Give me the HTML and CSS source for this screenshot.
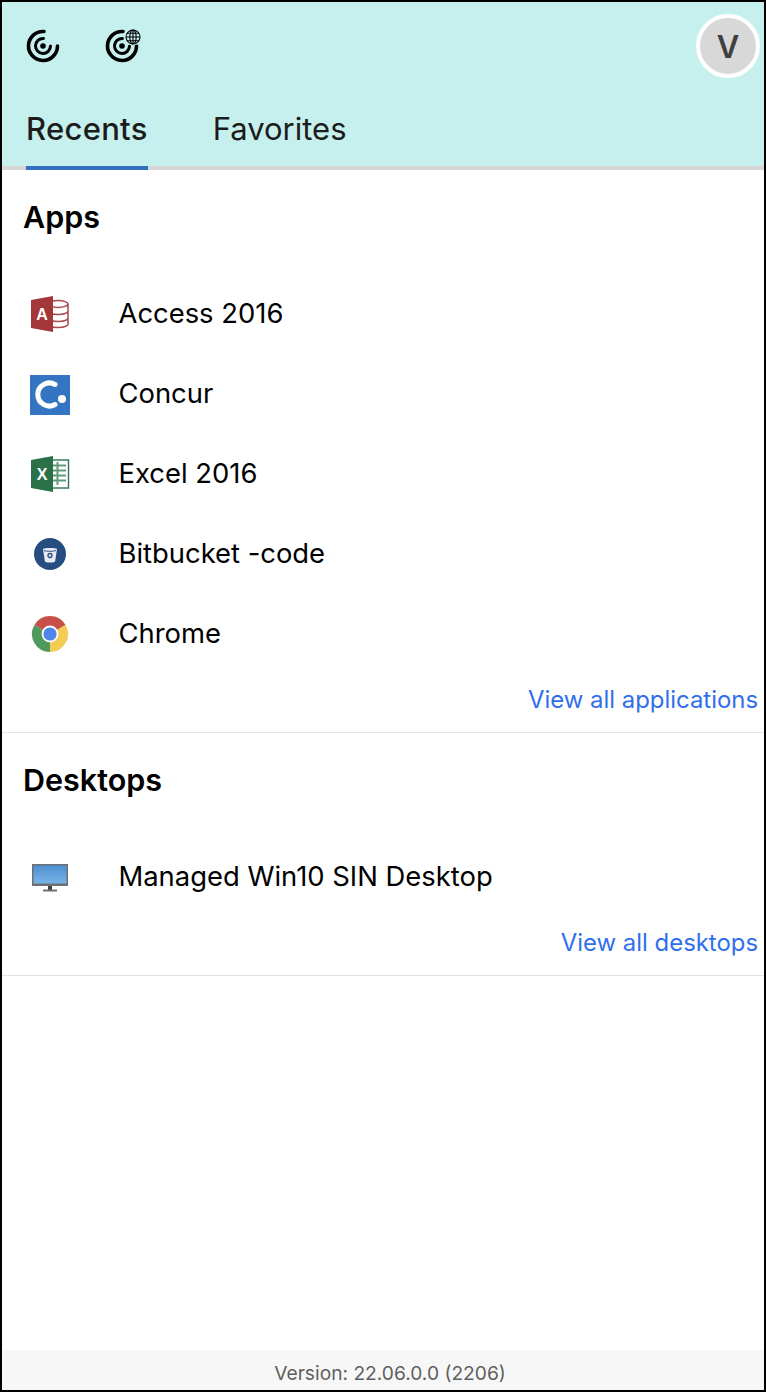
FILE: index.html
```html
<!DOCTYPE html>
<html lang="en">
<head>
    <meta charset="UTF-8">
    <meta name="viewport" content="width=device-width, initial-scale=1.0">
    <title>Workspace</title>
    <link rel="stylesheet" href="styles.css">
</head>
<body>
    <div class="frame">
        <header class="top">
            <div class="top-bar">
                <div class="top-icons">
                    <svg class="logo" viewBox="0 0 34 34" fill="none" stroke="#000" stroke-linecap="round">
                        <path d="M18 2.500A14.500 14.500 0 1 0 31.500 17" stroke-width="3.600"/>
                        <path d="M17.500 9.500A7.500 7.500 0 1 0 24.500 17" stroke-width="3"/>
                        <circle cx="17" cy="17" r="2.800" fill="#000" stroke="none"/>
                    </svg>
                    <svg class="logo logo-wide" viewBox="0 0 36 34" fill="none" stroke="#000" stroke-linecap="round">
                        <path d="M18 2.500A14.500 14.500 0 1 0 31.500 17" stroke-width="3.600"/>
                        <path d="M17.500 9.500A7.500 7.500 0 1 0 24.500 17" stroke-width="3"/>
                        <circle cx="17" cy="17" r="2.800" fill="#000" stroke="none"/>
                        <circle cx="28" cy="8" r="8.400" fill="#c6f0ed" stroke="none"/>
                        <g stroke-width="1.100" stroke-linecap="butt">
                            <circle cx="28" cy="8" r="7"/>
                            <ellipse cx="28" cy="8" rx="3.200" ry="7"/>
                            <path d="M28 1v14M21 8h14M22 4.200h12M22 11.800h12"/>
                        </g>
                    </svg>
                </div>
                <div class="avatar">V</div>
            </div>
            <nav class="tabs">
                <a class="tab active">Recents</a>
                <a class="tab">Favorites</a>
            </nav>
        </header>

        <main class="content">
            <section class="group">
                <h2>Apps</h2>
                <ul class="items">
                    <li>
                        <span class="item-icon">
                            <svg width="40" height="36" viewBox="0 0 40 36">
                                <g fill="none" stroke="#a8494c" stroke-width="1.500">
                                    <ellipse cx="28" cy="8" rx="10" ry="3.400"/>
                                    <path d="M18 8v20c0 2 4.500 3.400 10 3.400s10-1.400 10-3.400V8M18 15c0 2 4.500 3.400 10 3.400s10-1.400 10-3.400M18 22c0 2 4.500 3.400 10 3.400s10-1.400 10-3.400"/>
                                </g>
                                <path d="M1 4 23 0v36L1 32z" fill="#a4373a"/>
                                <text class="glyph" x="12" y="24" text-anchor="middle">A</text>
                            </svg>
                        </span>
                        Access 2016
                    </li>
                    <li>
                        <span class="item-icon icon-low">
                            <svg width="40" height="40" viewBox="0 0 40 40">
                                <rect width="40" height="40" fill="#3375c2"/>
                                <path d="M25 9.500A11.500 11.500 0 1 0 25 29.500" fill="none" stroke="#fff" stroke-width="5" stroke-linecap="round"/>
                                <circle cx="32" cy="24" r="4" fill="#fff"/>
                            </svg>
                        </span>
                        Concur
                    </li>
                    <li>
                        <span class="item-icon">
                            <svg width="40" height="36" viewBox="0 0 40 36">
                                <rect x="18" y="4" width="20.500" height="28" fill="#fff" stroke="#2f7350" stroke-width="1.400"/>
                                <path d="M21 9.500h15M21 14.500h15M21 19.500h15M21 24.500h15M27.500 6v23" stroke="#5f9a7a" stroke-width="2"/>
                                <path d="M1 4 23 0v36L1 32z" fill="#2a7148"/>
                                <text class="glyph" x="12" y="24" text-anchor="middle">X</text>
                            </svg>
                        </span>
                        Excel 2016
                    </li>
                    <li>
                        <span class="item-icon">
                            <svg width="32" height="32" viewBox="0 0 32 32">
                                <circle cx="16" cy="16" r="16" fill="#264d80"/>
                                <path d="M9 11c0-1.500 14-1.500 14 0l-1.800 12q-.4 1.500-5.200 1.500t-5.200-1.500z" fill="#e8ecf2"/>
                                <path d="M10 12.500c2 1 10 1 12 0" fill="none" stroke="#264d80" stroke-width="1"/>
                                <circle cx="16" cy="17.500" r="2" fill="none" stroke="#264d80" stroke-width="1.300"/>
                            </svg>
                        </span>
                        Bitbucket -code
                    </li>
                    <li>
                        <span class="item-icon">
                            <svg width="38" height="38" viewBox="0 0 38 38">
                                <path d="M19 19 3.400 10A18 18 0 0 1 34.600 10z" fill="#c9504a"/>
                                <path d="M19 19 3.400 10A18 18 0 0 0 19 37l5-9z" fill="#4f9a5d"/>
                                <path d="M19 19 34.600 10A18 18 0 0 1 19 37z" fill="#f4cd57"/>
                                <circle cx="19" cy="19" r="8.400" fill="#fff"/>
                                <circle cx="19" cy="19" r="6.600" fill="#4f86e8"/>
                            </svg>
                        </span>
                        Chrome
                    </li>
                </ul>
                <a class="view-all">View all applications</a>
            </section>

            <section class="group">
                <h2>Desktops</h2>
                <ul class="items">
                    <li>
                        <span class="item-icon icon-low">
                            <svg width="36" height="28" viewBox="0 0 36 28">
                                <defs>
                                    <linearGradient id="screen" x1="0" y1="0" x2="0" y2="1">
                                        <stop offset="0" stop-color="#4d8fd0"/>
                                        <stop offset="1" stop-color="#79b4e6"/>
                                    </linearGradient>
                                </defs>
                                <rect width="36" height="22" fill="#6a7076"/>
                                <rect x="1.500" y="1.500" width="33" height="18" fill="url(#screen)"/>
                                <rect x="16" y="22" width="4" height="4" fill="#3c4146"/>
                                <rect x="11" y="25.500" width="14" height="2" fill="#6a6f75"/>
                            </svg>
                        </span>
                        Managed Win10 SIN Desktop
                    </li>
                </ul>
                <a class="view-all">View all desktops</a>
            </section>
        </main>

        <footer class="version">Version: 22.06.0.0 (2206)</footer>
    </div>
</body>
</html>
```

FILE: styles.css
```css
* {
    box-sizing: border-box;
}
body {
    margin: 0;
    background-color: #ffffff;
    color: #000000;
    font-family: Inter, "Liberation Sans", sans-serif;
}
.frame {
    display: flex;
    flex-direction: column;
    height: 1392px;
    border: 2px solid #000000;
}
.top {
    background-color: #c6f0ed;
    height: 168px;
    display: flex;
    flex-direction: column;
}
.top-bar {
    display: flex;
    justify-content: space-between;
    align-items: flex-start;
    height: 94px;
    padding: 12px 4px 0 24px;
}
.top-icons {
    display: flex;
    gap: 45px;
    padding-top: 15px;
}
.logo {
    width: 34px;
    height: 34px;
    display: block;
}
.logo-wide {
    width: 36px;
}
.avatar {
    width: 64px;
    height: 64px;
    border-radius: 50%;
    background-color: #d8d8d8;
    border: 4px solid #ffffff;
    color: #404040;
    font-size: 31px;
    font-weight: 600;
    display: flex;
    align-items: center;
    justify-content: center;
}
.tabs {
    flex: 1;
    display: flex;
    gap: 65px;
    padding-left: 24px;
    border-bottom: 4px solid #d6d6d6;
}
.tab {
    font-size: 31px;
    line-height: 66px;
    height: 74px;
    margin-bottom: -4px;
    color: #1c1c1c;
}
.tab.active {
    font-weight: 500;
    letter-spacing: 0.3px;
    border-bottom: 4px solid #3270c4;
}
.content {
    flex: 1;
}
.group {
    display: flow-root;
    border-bottom: 1px solid #e3e3e3;
}
.group h2 {
    margin: 0;
    padding: 29px 0 0 21px;
    font-size: 30.5px;
    line-height: 36px;
    font-weight: 600;
}
.items {
    list-style: none;
    margin: 0;
    padding: 38px 0 0 0;
}
.items li {
    display: flex;
    align-items: center;
    height: 80px;
    font-size: 27.4px;
}
.item-icon {
    width: 116.5px;
    padding: 2px 21px 0 0;
    display: flex;
    justify-content: center;
}
.icon-low {
    padding-top: 4px;
}
.glyph {
    fill: #ffffff;
    font-size: 16px;
    font-weight: 700;
    font-family: "Liberation Sans", sans-serif;
}
.view-all {
    display: block;
    text-align: right;
    padding-right: 6px;
    height: 59px;
    line-height: 54px;
    font-size: 23.9px;
    color: #2f6fed;
}
.version {
    height: 40px;
    background-color: #f7f7f7;
    color: #5f5f5f;
    font-size: 19.2px;
    line-height: 47px;
    text-align: center;
    padding-left: 14px;
}
```
